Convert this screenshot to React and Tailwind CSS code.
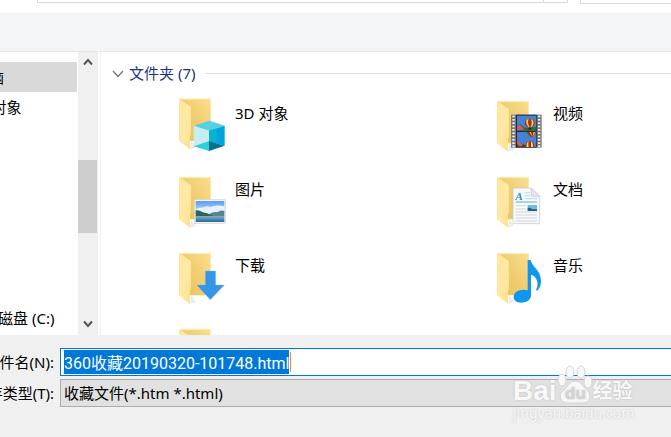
import { useEffect, useRef } from "react";

function Folder({ raised, children }) {
  return (
    <svg viewBox="0 0 150 162" className="w-[50px] h-[54px] shrink-0 overflow-visible" aria-hidden="true">
      <defs>
        <linearGradient id="folderBack" x1="0" y1="1" x2="1" y2="0">
          <stop offset="0" stopColor="#e6c25c" />
          <stop offset="0.5" stopColor="#efcd70" />
          <stop offset="1" stopColor="#fbdf8c" />
        </linearGradient>
        <linearGradient id="folderFlap" x1="0" y1="0" x2="1" y2="1">
          <stop offset="0" stopColor="#ffe699" />
          <stop offset="0.5" stopColor="#ffe9a6" />
          <stop offset="1" stopColor="#fddf88" />
        </linearGradient>
      </defs>
      <g transform={raised ? "translate(1 -7)" : "translate(1 0)"}>
        <path d="M32 153 L50 146 L36 126Z" fill="#ececec" />
        <path d="M0 0H94V127H0Z" fill="url(#folderBack)" />
        <path d="M0 0 L35 25 V108 L32 112 V152 L0 128Z" fill="url(#folderFlap)" />
        <path d="M0 1H94" stroke="#fff0bd" strokeWidth="3" />
        {children}
      </g>
    </svg>
  );
}

function Cube() {
  return (
    <>
      <path d="M43 81 L90 66 L136 81 L89 96Z" fill="#56cfe3" />
      <path d="M43 81 L89 96 V127 L43 143Z" fill="#c6edf1" />
      <path d="M43 143 L89 127 V157Z" fill="#2fcfdc" />
      <path d="M89 96 L136 81 V141 L89 127Z" fill="#00a3dc" />
      <path d="M89 96 L112 89 V134 L89 127Z" fill="#00b5d6" />
      <path d="M89 127 L136 141 L89 157Z" fill="#00708f" />
    </>
  );
}

function Film() {
  const holes = [44, 54, 64, 74, 84, 94, 104, 114, 124, 133];
  return (
    <>
      <rect x="41" y="41" width="92" height="99" fill="#777" />
      <rect x="56" y="41" width="62" height="99" fill="#2b2b30" />
      {holes.map((y) => (
        <g key={y} fill="#f2f2f2">
          <rect x="45" y={y} width="7" height="5" />
          <rect x="122" y={y} width="7" height="5" />
        </g>
      ))}
      <rect x="59" y="44" width="57" height="45" fill="#4382d8" />
      <rect x="59" y="93" width="57" height="45" fill="#4382d8" />
      <path d="M59 73 L68 69 L82 80 L116 78 V89 H59Z" fill="#2c6b35" />
      <path d="M59 75 L66 70 L82 86 L59 88Z" fill="#c65c7a" />
      <path d="M59 132 L64 122 L82 132 L100 136 V138 H59Z" fill="#2c4b35" />
      <path d="M59 128 L64 120 L77 132 L68 137Z" fill="#e0556b" />
      <ellipse cx="97" cy="66" rx="15" ry="13" fill="#a82f1c" />
      <path d="M88 56 Q83 66 94 79 L97 79 Q89 66 94 54Z M100 54 Q107 66 99 79 L102 78 Q114 66 105 56Z" fill="#ffd22e" />
      <rect x="94" y="80" width="7" height="6" fill="#302018" />
      <path d="M88 93 H116 Q112 102 105 109 H101 Q92 102 88 93Z" fill="#96321e" />
      <path d="M97 93 H101 L104 108Z M109 93 H114 L105 108Z" fill="#ffd22e" />
      <path d="M84 138 Q84 120 97 120 Q111 120 111 138Z" fill="#a82f1c" />
      <path d="M88 138 Q86 126 94 121 Q92 130 94 138Z M101 121 Q109 127 107 138 H101Z" fill="#ffd22e" />
    </>
  );
}

function Photo() {
  return (
    <>
      <defs>
        <linearGradient id="sky" x1="0" y1="0" x2="0" y2="1">
          <stop offset="0" stopColor="#5a9cf0" />
          <stop offset="0.6" stopColor="#c9e4f8" />
        </linearGradient>
        <linearGradient id="lake" x1="0" y1="0" x2="0" y2="1">
          <stop offset="0" stopColor="#7fb0c8" />
          <stop offset="1" stopColor="#28689c" />
        </linearGradient>
      </defs>
      <rect x="45" y="68" width="94" height="71" fill="#f4f5f7" stroke="#d0d3d8" strokeWidth="2" />
      <rect x="49" y="72" width="86" height="63" fill="url(#sky)" />
      <path d="M49 98 Q58 90 68 92 Q82 84 94 90 Q110 82 135 88 V112 H49Z" fill="#e6f2fb" />
      <path d="M85 114 Q100 103 114 106 Q124 98 135 102 V118 H85Z" fill="#5c7f91" />
      <path d="M49 100 Q60 98 70 106 L84 109 L106 119 H49Z" fill="#2f6550" />
      <rect x="49" y="117" width="86" height="18" fill="url(#lake)" />
    </>
  );
}

function Paper() {
  return (
    <>
      <path d="M47 33 H102 L127 58 V140 H47Z" fill="#f7f8f9" stroke="#c3c6ca" strokeWidth="2" />
      <path d="M102 33 V58 H127Z" fill="#e3e6e9" stroke="#c3c6ca" strokeWidth="2" />
      <text x="54" y="68" fontSize="34" fontStyle="italic" fontWeight="700" fontFamily="Liberation Serif, serif" fill="#2d8fd0">
        A
      </text>
      <path d="M82 47H98 M82 56H98 M82 65H119" stroke="#b5dcec" strokeWidth="3" />
      <path d="M55 75H119" stroke="#65acd0" strokeWidth="3" />
      <path d="M55 86H86 M55 96H86 M55 105H119 M55 114H119 M55 123H119 M55 132H119" stroke="#d3d5d8" strokeWidth="3" />
      <rect x="91" y="84" width="28" height="18" fill="#73b8e6" />
      <path d="M91 93 Q98 91 104 96 L119 97 V102 H91Z" fill="#286180" />
    </>
  );
}

function DownArrow() {
  return <path d="M78 54 H109 V96 H135 L93 140 L52 96 H78Z" fill="#3596e8" stroke="#8cbfe8" strokeWidth="1" />;
}

function Note() {
  return (
    <path
      d="M91 21 H100 C104 43 131 50 131 85 C131 97 127 106 120 113 L116 111 C127 91 118 69 101 65 V127 C101 141 88 149 72 149 C57 149 49 142 49 132 C49 119 62 110 78 110 C84 110 88 111 91 112Z"
      fill="#0d96f2"
    />
  );
}

const folders = [
  { id: "objects", name: "3D 对象", icon: <Cube />, raised: true },
  { id: "videos", name: "视频", icon: <Film /> },
  { id: "pictures", name: "图片", icon: <Photo /> },
  { id: "documents", name: "文档", icon: <Paper /> },
  { id: "downloads", name: "下载", icon: <DownArrow /> },
  { id: "music", name: "音乐", icon: <Note /> },
  { id: "more" },
];

function Sidebar() {
  return (
    <nav className="flex w-[98px] shrink-0">
      <div className="flex flex-1 flex-col overflow-hidden pt-[10px] pb-1 whitespace-nowrap">
        <a href="#pc" className="mr-px block h-[30px] bg-[#d9d9d9] leading-[30px]">
          <span className="-ml-[41px]">此电脑</span>
        </a>
        <a href="#objects" className="block h-[30px] leading-[30px]">
          <span className="-ml-8">3D 对象</span>
        </a>
        <a href="#disk-c" className="mt-auto block h-[26px] leading-[26px]">
          <span className="-ml-8">本地磁盘 (C:)</span>
        </a>
      </div>
      <div className="flex w-5 flex-col bg-[#f0f0f0]">
        <button aria-label="向上滚动" className="flex h-5 w-[19px] items-center justify-center">
          <svg viewBox="0 0 10 8" className="h-2 w-[10px]" fill="none" stroke="#555" strokeWidth="2">
            <path d="M1 6.500 L5 2 L9 6.500" />
          </svg>
        </button>
        <div className="mt-[88px] h-[73px] w-[19px] bg-[#cdcdcd]" />
        <button aria-label="向下滚动" className="mt-auto flex h-[22px] w-[19px] items-center justify-center">
          <svg viewBox="0 0 10 8" className="h-2 w-[10px]" fill="none" stroke="#555" strokeWidth="2">
            <path d="M1 1.500 L5 6 L9 1.500" />
          </svg>
        </button>
      </div>
    </nav>
  );
}

function Watermark() {
  return (
    <div className="pointer-events-none absolute right-[38px] bottom-4 w-[120px] text-[#f8f8f8] [text-shadow:0_0_2px_#bbb]">
      <div className="flex h-10 items-end font-['Liberation_Sans','Noto_Sans_CJK_SC',sans-serif] font-bold">
        <span className="text-[28px] leading-7">Bai</span>
        <svg viewBox="0 0 36 40" className="h-10 w-9 shrink-0" aria-hidden="true">
          <g fill="#f8f8f8" stroke="#d4d4d4" strokeWidth="1">
            <ellipse cx="13" cy="7" rx="4" ry="6" />
            <ellipse cx="24" cy="7" rx="4" ry="6" />
            <ellipse cx="5" cy="15" rx="4" ry="6" />
            <ellipse cx="31" cy="17" rx="4" ry="6" />
            <path d="M18 16 C24 16 26 22 30 25 C35 30 33 38 26 38 H11 C3 38 1 30 6 26 C11 22 12 16 18 16Z" />
          </g>
          <text x="8" y="34" fontSize="17" fill="#d4d4d4">du</text>
        </svg>
        <span className="text-[20px] leading-7">经验</span>
      </div>
      <div className="text-[14px] leading-4">jingyan.baidu.com</div>
    </div>
  );
}

export default function App() {
  const nameRef = useRef(null);

  useEffect(() => {
    nameRef.current.focus();
    nameRef.current.select();
  }, []);

  return (
    <div className="relative flex h-screen flex-col overflow-hidden bg-white font-['Noto_Sans','Noto_Sans_CJK_SC',sans-serif] text-[15px] text-black">
      <header className="flex h-[13px] shrink-0 items-start">
        <div className="ml-[37px] flex h-[3px] w-[531px] justify-end border-x border-b border-[#d9d9d9]">
          <div className="w-6 border-l border-[#d9d9d9]" />
        </div>
        <div className="ml-3 h-1 flex-1 border-b border-l border-[#d9d9d9]" />
      </header>
      <div className="h-[39px] shrink-0 border-b border-[#e5e7ea] bg-[#f4f5f7]" />

      <div className="flex min-h-0 flex-1 overflow-hidden">
        <Sidebar />
        <main className="ml-0.5 flex-1 overflow-hidden border-l border-[#f0f0f0] pt-[10px] pl-[11px]">
          <h2 className="flex h-[23px] items-center text-[#1e3287]">
            <svg viewBox="0 0 12 8" className="mr-[5px] h-2 w-3" fill="none" stroke="#777" strokeWidth="1.300">
              <path d="M1 1 L6 6.500 L11 1" />
            </svg>
            文件夹 (7)
            <span className="ml-[10px] h-px flex-1 bg-[#e2e2e2]" />
          </h2>
          <ul className="mt-4 grid grid-cols-[318px_1fr] pl-[67px]">
            {folders.map((f) => (
              <li key={f.id} className="flex h-[76px] gap-[6px]">
                <Folder raised={f.raised}>{f.icon}</Folder>
                {f.name && <span className="leading-6">{f.name}</span>}
              </li>
            ))}
          </ul>
        </main>
      </div>

      <footer className="flex shrink-0 flex-col gap-[3px] bg-[#f0f0f0] pt-[13px] pb-[30px]">
        <div className="relative flex h-7 items-center">
          <label htmlFor="filename" className="flex w-[60px] shrink-0 justify-end overflow-hidden pr-[6px] whitespace-nowrap">
            文件名(N):
          </label>
          <input
            id="filename"
            ref={nameRef}
            defaultValue="360收藏20190320-101748.html"
            className="h-7 min-w-0 flex-1 border border-r-0 border-[#0078d7] bg-white px-[3px] font-[Roboto,'Noto_Sans_CJK_SC',sans-serif] text-[16px] outline-none selection:bg-[#0078d7] selection:text-white"
          />
          {/* caret at the end of the selected name */}
          <span className="absolute top-1 left-[290px] h-5 w-px bg-[#ff8728]" />
        </div>
        <div className="flex h-7 items-center">
          <label htmlFor="filetype" className="flex w-[60px] shrink-0 justify-end overflow-hidden pr-[6px] whitespace-nowrap">
            保存类型(T):
          </label>
          <select
            id="filetype"
            className="h-7 min-w-0 flex-1 appearance-none border border-r-0 border-[#adadad] bg-[#e1e1e1] px-[3px] outline-none"
          >
            <option>收藏文件(*.htm *.html)</option>
          </select>
        </div>
      </footer>
      <Watermark />
    </div>
  );
}
